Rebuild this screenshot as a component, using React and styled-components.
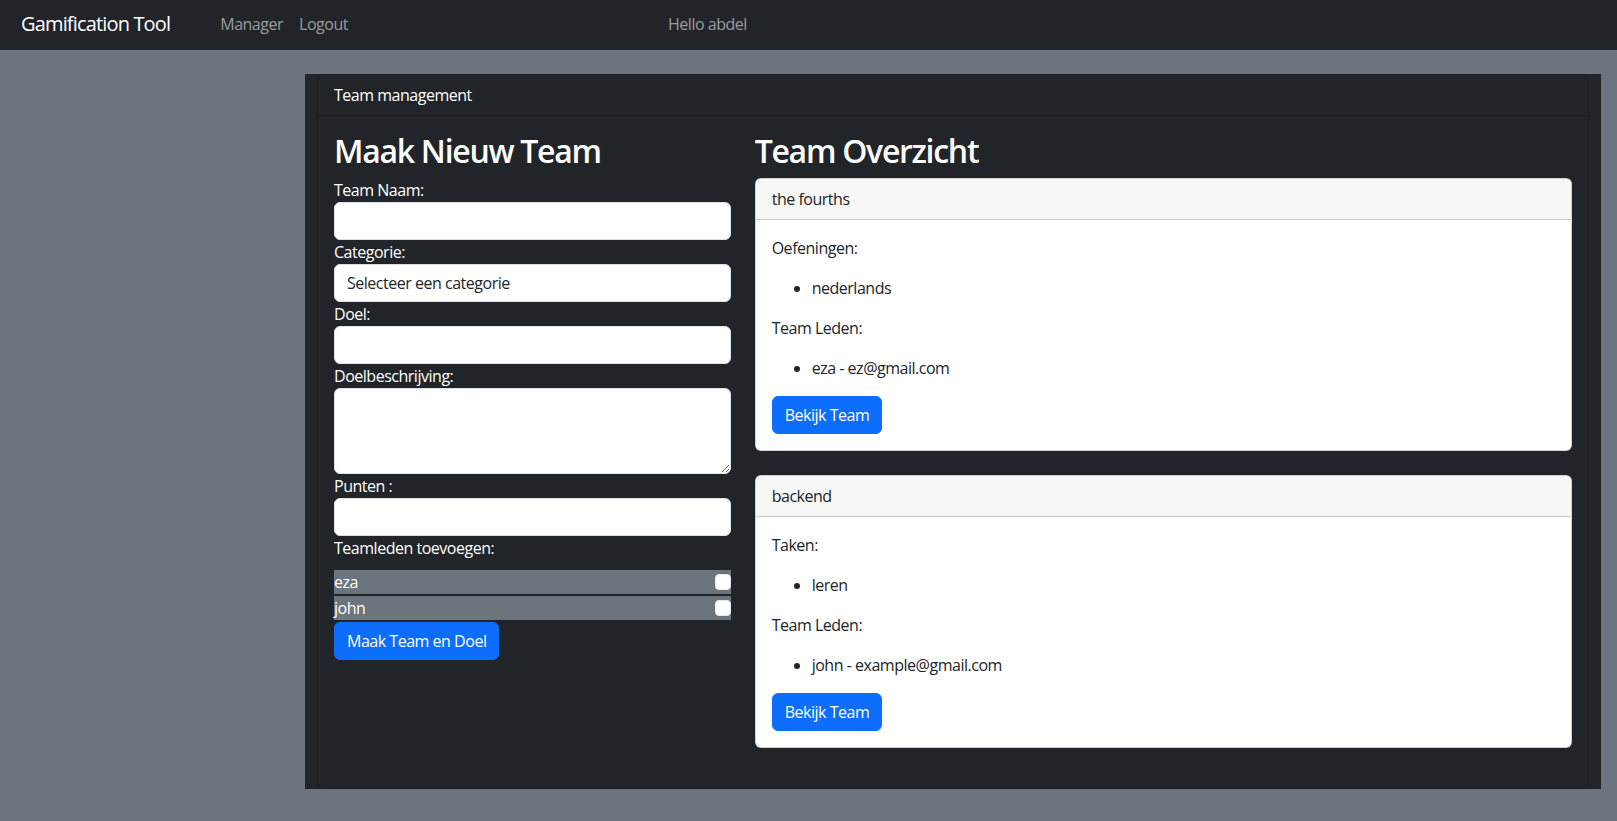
import React from "react";
import styled, { createGlobalStyle } from "styled-components";

const FONT = `"Open Sans", "Noto Sans", "Liberation Sans", sans-serif`;

const GlobalStyle = createGlobalStyle`
  *, *::before, *::after { box-sizing: border-box; }
  html, body { margin: 0; padding: 0; }
  body {
    background: #6c757d;
    font-family: ${FONT};
    font-size: 16px;
    line-height: 1.5;
    letter-spacing: -0.03em;
    color: #212529;
    min-height: 821px;
  }
  input, select, textarea, button { letter-spacing: inherit; }
`;

const Navbar = styled.nav`
  display: flex;
  align-items: center;
  height: 50px;
  padding: 0 0 2px 21px;
  background: #212529;
`;

const NavLeft = styled.div`
  display: flex;
  align-items: center;
  flex: 0 0 647px;
`;

const Brand = styled.a`
  font-size: 20px;
  line-height: 30px;
  letter-spacing: -0.042em;
  color: #fff;
  text-decoration: none;
  margin-right: 42px;
`;

const NavLinks = styled.div`
  display: flex;
`;

const NavLink = styled.a`
  padding: 0 8px;
  color: rgba(255, 255, 255, 0.55);
  text-decoration: none;
  line-height: 24px;
`;

const Greeting = styled.span`
  color: rgba(255, 255, 255, 0.55);
  line-height: 24px;
`;

const Page = styled.main`
  padding: 24px 0 33px 305px;
`;

const Panel = styled.section`
  width: 1296px;
  background: #212529;
  padding: 0 12px;
`;

const Card = styled.div`
  background: ${(p) => (p.$dark ? "#212529" : "#fff")};
  color: ${(p) => (p.$dark ? "#fff" : "#212529")};
  border: 1px solid ${(p) => (p.$dark ? "#1b1e22" : "rgba(0,0,0,0.175)")};
  border-radius: 6px;
  margin-bottom: ${(p) => (p.$dark ? "0" : "24px")};
`;

const CardHeader = styled.div`
  padding: 8px 16px;
  line-height: 24px;
  background: ${(p) => (p.$dark ? "transparent" : "#f7f7f7")};
  border-bottom: 1px solid ${(p) => (p.$dark ? "#1b1e22" : "rgba(0,0,0,0.175)")};
  border-radius: 5px 5px 0 0;
`;

const CardBody = styled.div`
  padding: 16px;
`;

const Columns = styled.div`
  display: grid;
  grid-template-columns: calc((100% + 24px) / 3 - 24px) 1fr;
  column-gap: 24px;
`;

const Column = styled.div`
  min-width: 0;
`;

const Heading = styled.h2`
  margin: 0 0 8px;
  font-size: 32px;
  font-weight: 600;
  line-height: 1.2;
  letter-spacing: -0.04em;
  color: #fff;
`;

const Form = styled.form`
  display: flex;
  flex-direction: column;
`;

const Label = styled.label`
  display: block;
  color: #fff;
  line-height: 24px;
  margin-bottom: ${(p) => p.$mb || "0"};
`;

const Input = styled.input`
  display: block;
  width: 100%;
  height: 38px;
  padding: 6px 12px;
  font: inherit;
  color: #212529;
  background: #fff;
  border: 1px solid #dee2e6;
  border-radius: 6px;
  outline: none;
`;

const Select = styled.select`
  display: block;
  width: 100%;
  height: 38px;
  padding: 6px 12px;
  font: inherit;
  color: #212529;
  background: #fff;
  border: 1px solid #dee2e6;
  border-radius: 6px;
  appearance: none;
  -webkit-appearance: none;
  outline: none;
`;

const TextArea = styled.textarea`
  display: block;
  width: 100%;
  height: 86px;
  padding: 6px 12px;
  font: inherit;
  color: #212529;
  background: #fff;
  border: 1px solid #dee2e6;
  border-radius: 6px;
  outline: none;
`;

const MemberRow = styled.div`
  display: flex;
  align-items: center;
  justify-content: space-between;
  height: 24px;
  margin-bottom: 2px;
  background: #6c757d;
  color: #fff;
`;

const Check = styled.input`
  appearance: none;
  -webkit-appearance: none;
  width: 16px;
  height: 16px;
  margin: 0;
  background: #fff;
  border: 1px solid #e9ecef;
  border-radius: 4px;
`;

const Button = styled.button`
  align-self: flex-start;
  display: inline-block;
  height: 38px;
  padding: 6px 12px;
  font: inherit;
  line-height: 24px;
  color: #fff;
  background: #0d6efd;
  border: 1px solid #0d6efd;
  border-radius: 6px;
  cursor: pointer;
`;

const Text = styled.p`
  margin: 0 0 16px;
`;

const List = styled.ul`
  margin: 0 0 16px;
  padding-left: 40px;
`;

const teams = [
  {
    name: "the fourths",
    label: "Oefeningen:",
    items: ["nederlands"],
    members: ["eza - ez@gmail.com"],
  },
  {
    name: "backend",
    label: "Taken:",
    items: ["leren"],
    members: ["john - example@gmail.com"],
  },
];

export default function App() {
  return (
    <>
      <GlobalStyle />
      <Navbar>
        <NavLeft>
          <Brand href="#">Gamification Tool</Brand>
          <NavLinks>
            <NavLink href="#">Manager</NavLink>
            <NavLink href="#">Logout</NavLink>
          </NavLinks>
        </NavLeft>
        <Greeting>Hello abdel</Greeting>
      </Navbar>
      <Page>
        <Panel>
          <Card $dark>
            <CardHeader $dark>Team management</CardHeader>
            <CardBody>
              <Columns>
                <Column>
                  <Heading>Maak Nieuw Team</Heading>
                  <Form onSubmit={(e) => e.preventDefault()}>
                    <Label>Team Naam:</Label>
                    <Input type="text" />
                    <Label>Categorie:</Label>
                    <Select defaultValue="">
                      <option value="">Selecteer een categorie</option>
                    </Select>
                    <Label>Doel:</Label>
                    <Input type="text" />
                    <Label>Doelbeschrijving:</Label>
                    <TextArea rows={3} />
                    <Label>Punten :</Label>
                    <Input type="number" />
                    <Label $mb="10px">Teamleden toevoegen:</Label>
                    <MemberRow>
                      <span>eza</span>
                      <Check type="checkbox" />
                    </MemberRow>
                    <MemberRow>
                      <span>john</span>
                      <Check type="checkbox" />
                    </MemberRow>
                    <Button type="submit">Maak Team en Doel</Button>
                  </Form>
                </Column>
                <Column>
                  <Heading>Team Overzicht</Heading>
                  {teams.map((t) => (
                    <Card key={t.name}>
                      <CardHeader>{t.name}</CardHeader>
                      <CardBody>
                        <Text>{t.label}</Text>
                        <List>
                          {t.items.map((i) => (
                            <li key={i}>{i}</li>
                          ))}
                        </List>
                        <Text>Team Leden:</Text>
                        <List>
                          {t.members.map((m) => (
                            <li key={m}>{m}</li>
                          ))}
                        </List>
                        <Button type="button">Bekijk Team</Button>
                      </CardBody>
                    </Card>
                  ))}
                </Column>
              </Columns>
            </CardBody>
          </Card>
        </Panel>
      </Page>
    </>
  );
}
